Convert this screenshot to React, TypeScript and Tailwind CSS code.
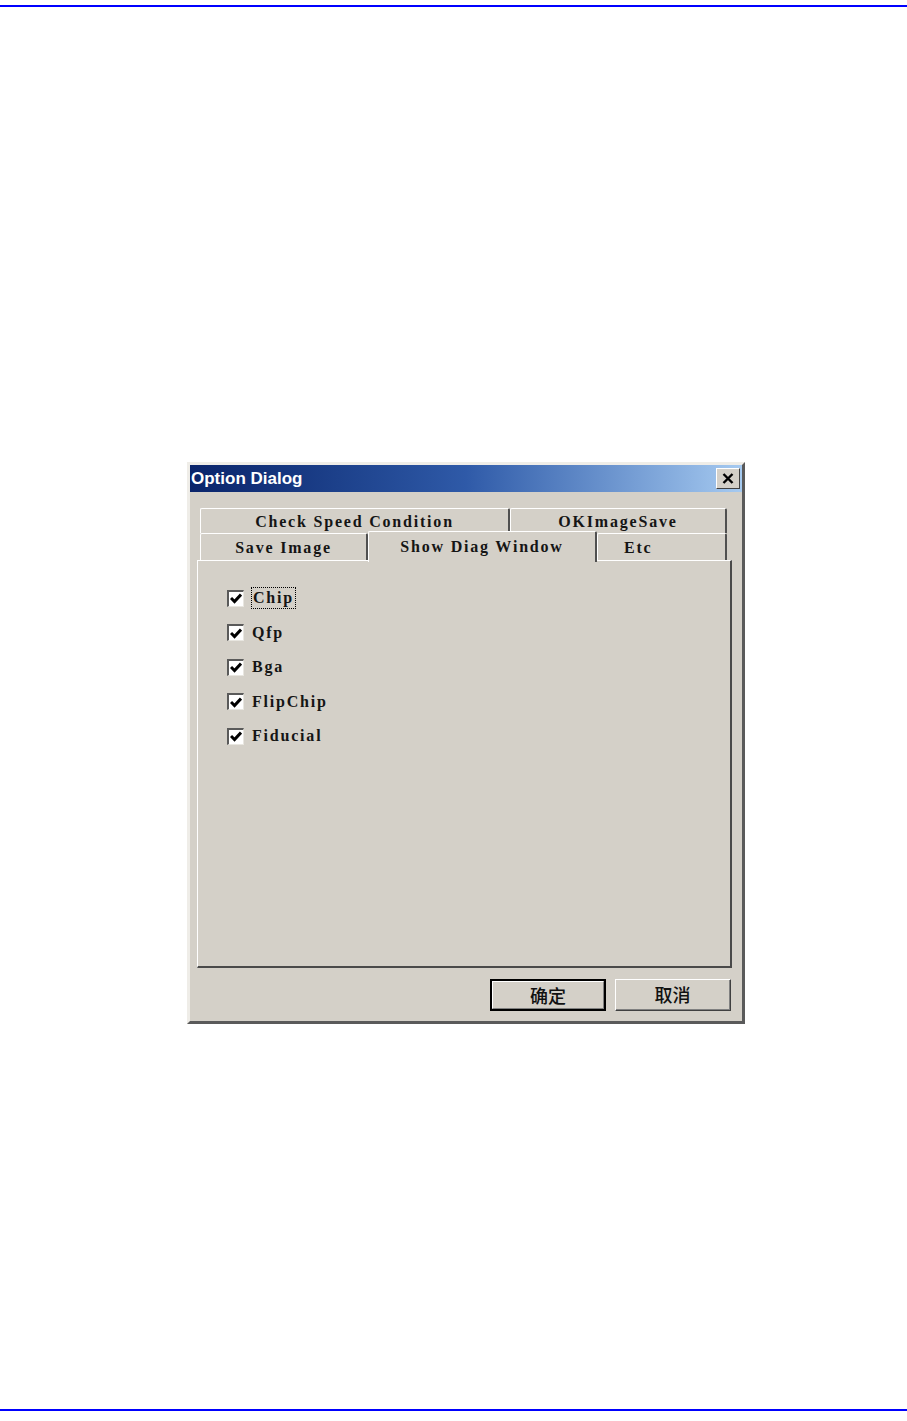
import React from "react";

const serif = { fontFamily: '"Liberation Serif", "Times New Roman", serif' };

const Check = () => (
  <div className="w-[17px] h-[17px] bg-white border-t-2 border-l-2 border-t-[#5a5a5a] border-l-[#5a5a5a] border-r border-b border-r-[#e8e6e0] border-b-[#e8e6e0] flex items-center justify-center">
    <svg width="12" height="11" viewBox="0 0 12 11">
      <polyline points="1,5 4.5,8.5 11,1.5" fill="none" stroke="#000" strokeWidth="3" />
    </svg>
  </div>
);

const items = ["Chip", "Qfp", "Bga", "FlipChip", "Fiducial"];

const tabText = "text-[16px] font-bold tracking-[1.8px] text-[#151515]";

const App = () => {
  return (
    <div className="h-[1421px] bg-white flex flex-col">
      {/* top rule */}
      <div className="mt-[5px] h-[2px] bg-[#0000ff]" />

      {/* Option Dialog */}
      <div className="mt-[455px] ml-[187px] w-[558px] h-[562px] bg-[#d4d0c8] border-[3px] border-t-[#efede8] border-l-[#efede8] border-r-[#5a5a5a] border-b-[#5a5a5a] flex flex-col">
        {/* title bar */}
        <div className="h-[27px] flex items-center justify-between pl-[1px] pr-[2px] bg-gradient-to-r from-[#0a246a] via-[#2f5aa8] to-[#a6caf0]">
          <span
            className="text-white font-bold text-[17px] leading-none"
            style={{ fontFamily: '"Liberation Sans", Arial, sans-serif' }}
          >
            Option Dialog
          </span>
          <div className="w-[24px] h-[21px] bg-[#d4d0c8] border border-t-white border-l-white border-r-[#404040] border-b-[#404040] flex items-center justify-center">
            <svg width="12" height="11" viewBox="0 0 12 11">
              <path d="M1.5 1 L10.5 10 M10.5 1 L1.5 10" stroke="#000" strokeWidth="2.4" />
            </svg>
          </div>
        </div>

        {/* body */}
        <div className="pt-[16px] pl-[7px] flex flex-col" style={serif}>
          {/* back tab row */}
          <div className="ml-[3px] w-[527px] h-[25px] flex">
            <div className={`w-[310px] h-[25px] border-t border-l border-r-2 border-t-white border-l-white border-r-[#505050] rounded-t-[2px] flex items-center justify-center pt-[1px] ${tabText}`}>
              Check Speed Condition
            </div>
            <div className={`w-[217px] h-[25px] border-t border-l border-r-2 border-t-white border-l-white border-r-[#505050] rounded-t-[2px] flex items-center justify-center pt-[1px] ${tabText}`}>
              OKImageSave
            </div>
          </div>

          {/* front tab row */}
          <div className="ml-[3px] w-[527px] h-[27px] flex items-end relative z-10">
            <div className={`w-[168px] h-[27px] border-t border-l border-r-2 border-t-white border-l-white border-r-[#505050] rounded-t-[2px] flex items-center justify-center pt-[2px] ${tabText}`}>
              Save Image
            </div>
            <div className={`w-[229px] h-[31px] -mb-[2px] bg-[#d4d0c8] border-t border-l border-r-2 border-t-white border-l-white border-r-[#505050] rounded-t-[2px] flex justify-center pt-[3px] ${tabText}`}>
              Show Diag Window
            </div>
            <div className={`w-[130px] h-[27px] border-t border-l border-r-2 border-t-white border-l-white border-r-[#505050] rounded-t-[2px] flex items-center justify-start pl-[26px] pt-[2px] ${tabText}`}>
              Etc
            </div>
          </div>

          {/* tab panel */}
          <div className="w-[535px] h-[408px] border-t border-l border-t-white border-l-white border-r-2 border-b-2 border-r-[#4a4a4a] border-b-[#4a4a4a] pt-[20px] pl-[29px]">
            <div className="flex flex-col">
              {items.map((name, i) => (
                <div key={name} className="h-[34.5px] flex items-center">
                  <Check />
                  <span
                    className={
                      i === 0
                        ? `ml-[7px] px-[1px] border border-dotted border-black leading-[20px] ${tabText}`
                        : `ml-[8px] leading-[20px] ${tabText}`
                    }
                  >
                    {name}
                  </span>
                </div>
              ))}
            </div>
          </div>

          {/* buttons */}
          <div
            className="mt-[11px] w-[545px] flex justify-end gap-[9px] pr-[11px]"
            style={{ fontFamily: '"Noto Sans CJK SC", "Noto Sans", sans-serif' }}
          >
            <div className="w-[116px] h-[32px] border-2 border-black bg-[#d4d0c8] flex items-center justify-center text-[18px] font-medium text-[#111]">
              <div className="w-full h-full border border-t-white border-l-white border-r-[#808080] border-b-[#808080] flex items-center justify-center">
                确定
              </div>
            </div>
            <div className="w-[116px] h-[32px] border border-t-white border-l-white border-r-[#404040] border-b-[#404040] bg-[#d4d0c8] flex items-center justify-center text-[18px] font-medium text-[#111]">
              <div className="w-full h-full border-r border-b border-r-[#808080] border-b-[#808080] flex items-center justify-center">
                取消
              </div>
            </div>
          </div>
        </div>
      </div>

      {/* bottom rule */}
      <div className="mt-auto mb-[10px] h-[2px] bg-[#0000ff]" />
    </div>
  );
};

export default App;
